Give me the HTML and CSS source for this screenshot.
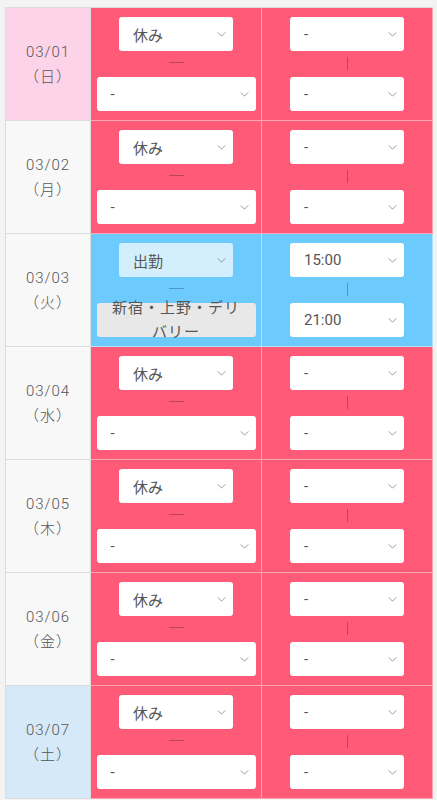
FILE: index.html
```html
<!DOCTYPE html>
<html lang="ja">
<head>
<meta charset="utf-8">
<link rel="stylesheet" href="styles.css">
</head>
<body>
<div class="schedule">

  <div class="row off">
    <div class="date sun"><span>03/01</span><span>（日）</span></div>
    <div class="cell shift">
      <div class="sel narrow"><span>休み</span><svg class="chev" viewBox="0 0 10 6"><polyline points="0.5,0.5 5,5 9.5,0.5"/></svg></div>
      <div class="dash"></div>
      <div class="sel wide"><span>-</span><svg class="chev" viewBox="0 0 10 6"><polyline points="0.5,0.5 5,5 9.5,0.5"/></svg></div>
    </div>
    <div class="cell time">
      <div class="sel narrow"><span>-</span><svg class="chev" viewBox="0 0 10 6"><polyline points="0.5,0.5 5,5 9.5,0.5"/></svg></div>
      <div class="bar"></div>
      <div class="sel narrow"><span>-</span><svg class="chev" viewBox="0 0 10 6"><polyline points="0.5,0.5 5,5 9.5,0.5"/></svg></div>
    </div>
  </div>

  <div class="row off">
    <div class="date"><span>03/02</span><span>（月）</span></div>
    <div class="cell shift">
      <div class="sel narrow"><span>休み</span><svg class="chev" viewBox="0 0 10 6"><polyline points="0.5,0.5 5,5 9.5,0.5"/></svg></div>
      <div class="dash"></div>
      <div class="sel wide"><span>-</span><svg class="chev" viewBox="0 0 10 6"><polyline points="0.5,0.5 5,5 9.5,0.5"/></svg></div>
    </div>
    <div class="cell time">
      <div class="sel narrow"><span>-</span><svg class="chev" viewBox="0 0 10 6"><polyline points="0.5,0.5 5,5 9.5,0.5"/></svg></div>
      <div class="bar"></div>
      <div class="sel narrow"><span>-</span><svg class="chev" viewBox="0 0 10 6"><polyline points="0.5,0.5 5,5 9.5,0.5"/></svg></div>
    </div>
  </div>

  <div class="row on">
    <div class="date"><span>03/03</span><span>（火）</span></div>
    <div class="cell shift">
      <div class="sel narrow active"><span>出勤</span><svg class="chev" viewBox="0 0 10 6"><polyline points="0.5,0.5 5,5 9.5,0.5"/></svg></div>
      <div class="dash"></div>
      <div class="area">新宿・上野・デリバリー</div>
    </div>
    <div class="cell time">
      <div class="sel narrow"><span>15:00</span><svg class="chev" viewBox="0 0 10 6"><polyline points="0.5,0.5 5,5 9.5,0.5"/></svg></div>
      <div class="bar"></div>
      <div class="sel narrow"><span>21:00</span><svg class="chev" viewBox="0 0 10 6"><polyline points="0.5,0.5 5,5 9.5,0.5"/></svg></div>
    </div>
  </div>

  <div class="row off">
    <div class="date"><span>03/04</span><span>（水）</span></div>
    <div class="cell shift">
      <div class="sel narrow"><span>休み</span><svg class="chev" viewBox="0 0 10 6"><polyline points="0.5,0.5 5,5 9.5,0.5"/></svg></div>
      <div class="dash"></div>
      <div class="sel wide"><span>-</span><svg class="chev" viewBox="0 0 10 6"><polyline points="0.5,0.5 5,5 9.5,0.5"/></svg></div>
    </div>
    <div class="cell time">
      <div class="sel narrow"><span>-</span><svg class="chev" viewBox="0 0 10 6"><polyline points="0.5,0.5 5,5 9.5,0.5"/></svg></div>
      <div class="bar"></div>
      <div class="sel narrow"><span>-</span><svg class="chev" viewBox="0 0 10 6"><polyline points="0.5,0.5 5,5 9.5,0.5"/></svg></div>
    </div>
  </div>

  <div class="row off">
    <div class="date"><span>03/05</span><span>（木）</span></div>
    <div class="cell shift">
      <div class="sel narrow"><span>休み</span><svg class="chev" viewBox="0 0 10 6"><polyline points="0.5,0.5 5,5 9.5,0.5"/></svg></div>
      <div class="dash"></div>
      <div class="sel wide"><span>-</span><svg class="chev" viewBox="0 0 10 6"><polyline points="0.5,0.5 5,5 9.5,0.5"/></svg></div>
    </div>
    <div class="cell time">
      <div class="sel narrow"><span>-</span><svg class="chev" viewBox="0 0 10 6"><polyline points="0.5,0.5 5,5 9.5,0.5"/></svg></div>
      <div class="bar"></div>
      <div class="sel narrow"><span>-</span><svg class="chev" viewBox="0 0 10 6"><polyline points="0.5,0.5 5,5 9.5,0.5"/></svg></div>
    </div>
  </div>

  <div class="row off">
    <div class="date"><span>03/06</span><span>（金）</span></div>
    <div class="cell shift">
      <div class="sel narrow"><span>休み</span><svg class="chev" viewBox="0 0 10 6"><polyline points="0.5,0.5 5,5 9.5,0.5"/></svg></div>
      <div class="dash"></div>
      <div class="sel wide"><span>-</span><svg class="chev" viewBox="0 0 10 6"><polyline points="0.5,0.5 5,5 9.5,0.5"/></svg></div>
    </div>
    <div class="cell time">
      <div class="sel narrow"><span>-</span><svg class="chev" viewBox="0 0 10 6"><polyline points="0.5,0.5 5,5 9.5,0.5"/></svg></div>
      <div class="bar"></div>
      <div class="sel narrow"><span>-</span><svg class="chev" viewBox="0 0 10 6"><polyline points="0.5,0.5 5,5 9.5,0.5"/></svg></div>
    </div>
  </div>

  <div class="row off">
    <div class="date sat"><span>03/07</span><span>（土）</span></div>
    <div class="cell shift">
      <div class="sel narrow"><span>休み</span><svg class="chev" viewBox="0 0 10 6"><polyline points="0.5,0.5 5,5 9.5,0.5"/></svg></div>
      <div class="dash"></div>
      <div class="sel wide"><span>-</span><svg class="chev" viewBox="0 0 10 6"><polyline points="0.5,0.5 5,5 9.5,0.5"/></svg></div>
    </div>
    <div class="cell time">
      <div class="sel narrow"><span>-</span><svg class="chev" viewBox="0 0 10 6"><polyline points="0.5,0.5 5,5 9.5,0.5"/></svg></div>
      <div class="bar"></div>
      <div class="sel narrow"><span>-</span><svg class="chev" viewBox="0 0 10 6"><polyline points="0.5,0.5 5,5 9.5,0.5"/></svg></div>
    </div>
  </div>

</div>
</body>
</html>
```

FILE: styles.css
```css
* { box-sizing: border-box; }

html, body {
  margin: 0;
  background: #f3f3f3;
}

body {
  padding: 7px 5px 0 5px;
  font-family: Roboto, "Noto Sans CJK JP", sans-serif;
  color: #555;
}

.schedule {
  width: 428px;
  border-top: 1px solid #dcdcdc;
  border-left: 1px solid #dcdcdc;
}

.row {
  display: grid;
  grid-template-columns: 85px 171px 171px;
  height: 113px;
}

.date {
  display: flex;
  flex-direction: column;
  align-items: center;
  justify-content: center;
  background: #f8f8f8;
  border-right: 1px solid #dcdcdc;
  border-bottom: 1px solid #dcdcdc;
  padding-top: 2px;
  font-size: 15px;
  font-weight: 300;
  line-height: 25px;
  letter-spacing: 1px;
  color: #555;
}

.date.sun { background: #fcd3e8; }
.date.sat { background: #d6e9f8; }

.cell {
  display: flex;
  flex-direction: column;
  align-items: center;
  padding: 9px 5px 0 5px;
  border-right: 1px solid rgba(255, 255, 255, 0.45);
  border-bottom: 1px solid rgba(255, 255, 255, 0.45);
}

.row.off .cell { background: #ff5a78; }
.row.on .cell { background: #6dcafc; }

.sel {
  height: 34px;
  background: #fff;
  border-radius: 3px;
  display: flex;
  align-items: center;
  justify-content: space-between;
  padding: 0 7px 0 14px;
  font-size: 15px;
  font-weight: 400;
  color: #555;
}

.sel.narrow { width: 114px; }
.sel.wide { width: 159px; }
.sel.active { background: #d3effd; }

.chev {
  width: 9px;
  height: 5px;
  fill: none;
  stroke: #888;
  stroke-width: 1;
}

.dash {
  width: 15px;
  height: 1px;
  margin: 11px 0 14px 0;
  background: rgba(0, 0, 0, 0.25);
}

.bar {
  width: 1px;
  height: 13px;
  margin: 6px 0 7px 0;
  background: rgba(0, 0, 0, 0.25);
}

.area {
  width: 159px;
  height: 34px;
  background: #e8e8e8;
  border-radius: 3px;
  display: flex;
  align-items: center;
  justify-content: center;
  text-align: center;
  padding: 0 14px;
  font-size: 15px;
  font-weight: 400;
  line-height: 24px;
  letter-spacing: 1px;
  color: #555;
}
```
